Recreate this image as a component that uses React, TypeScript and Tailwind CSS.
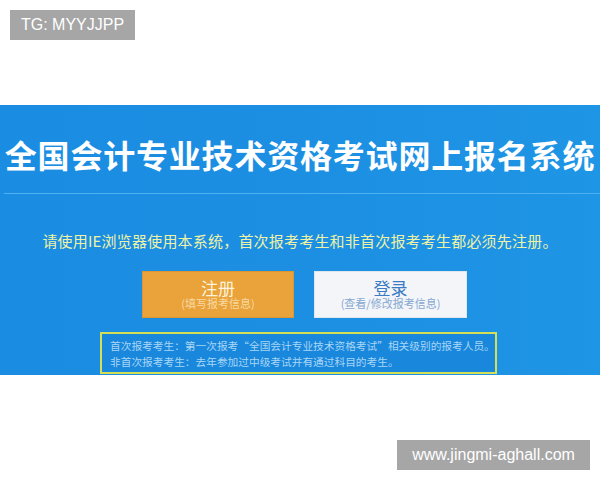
import React from 'react';

const cjk = { fontFamily: '"Noto Sans CJK SC", "Noto Sans", sans-serif' };

export default function App() {
  return (
    <div className="relative w-[600px] h-[480px] bg-white overflow-hidden" style={cjk}>
      <div className="pt-[105px]">
        <div className="h-[270px] flex flex-col bg-gradient-to-r from-[#1a8de2] via-[#1c8fe3] to-[#1f95e5]">
          <div className="h-[88px] pt-[10px] flex items-center justify-center">
            <h1 className="text-[32px] leading-none font-bold text-white tracking-[0.8px] whitespace-nowrap">
              全国会计专业技术资格考试网上报名系统
            </h1>
          </div>
          <div className="ml-[4px] h-px bg-[#4fb0f2]" />
          <p className="mt-[37px] text-center text-[15px] leading-[20px] tracking-[0.2px] text-[#eef2a6] whitespace-nowrap">
            请使用IE浏览器使用本系统，首次报考考生和非首次报考考生都必须先注册。
          </p>
          <div className="mt-[20px] pl-[142px] flex gap-[20px]">
            <button className="w-[152px] h-[47px] bg-[#e9a33a] flex flex-col items-center justify-center border border-[#d99632]">
              <span className="text-[17px] leading-[18px] text-[#fdf3dc]">注册</span>
              <span className="text-[11px] leading-[13px] text-[#f8d9a2]">(填写报考信息)</span>
            </button>
            <button className="w-[153px] h-[47px] bg-[#f3f5f8] flex flex-col items-center justify-center border border-[#dfe6ee]">
              <span className="text-[17px] leading-[18px] text-[#3b7ac4]">登录</span>
              <span className="text-[11px] leading-[13px] text-[#86a8d2]">(查看/修改报考信息)</span>
            </button>
          </div>
          <div className="mt-[14px] ml-[100px] w-[397px] h-[42px] border-2 border-[#d4df55] bg-[#1887dc] pl-[8px] pt-[4px] text-[10.7px] leading-[16px] text-[#a9d6f6] whitespace-nowrap">
            <div>首次报考考生：第一次报考“全国会计专业技术资格考试”相关级别的报考人员。</div>
            <div>非首次报考考生：去年参加过中级考试并有通过科目的考生。</div>
          </div>
        </div>
      </div>

      <div className="absolute left-[10px] top-[10px] w-[125px] h-[30px] bg-[#a6a6a6] flex items-center justify-center text-[16px] text-white" style={{ fontFamily: '"Liberation Sans", Arial, sans-serif' }}>
        TG: MYYJJPP
      </div>
      <div className="absolute left-[397px] top-[440px] w-[193px] h-[30px] bg-[#a6a6a6] flex items-center justify-center text-[16px] text-white" style={{ fontFamily: '"Liberation Sans", Arial, sans-serif' }}>
        www.jingmi-aghall.com
      </div>
    </div>
  );
}
